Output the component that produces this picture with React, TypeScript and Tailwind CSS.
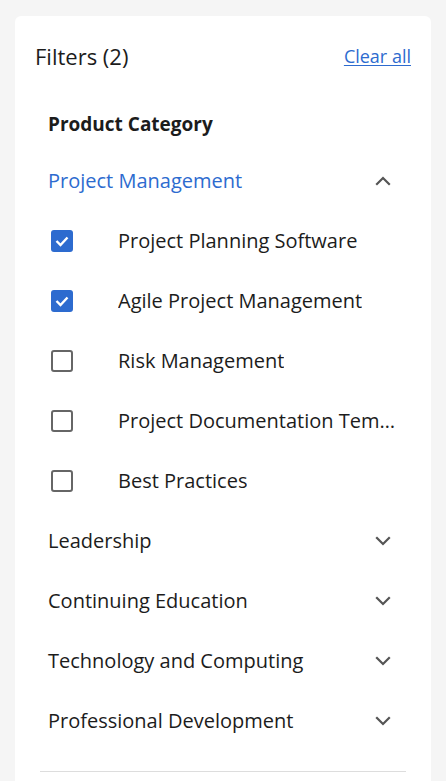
const font = { fontFamily: '"Open Sans", "Noto Sans", sans-serif' }

const items = [
  { label: 'Project Planning Software', checked: true },
  { label: 'Agile Project Management', checked: true },
  { label: 'Risk Management', checked: false },
  { label: 'Project Documentation Templates', checked: false },
  { label: 'Best Practices', checked: false },
]

const groups = ['Leadership', 'Continuing Education', 'Technology and Computing', 'Professional Development']

function Chevron({ up }: { up?: boolean }) {
  return (
    <svg width="24" height="24" viewBox="0 0 24 24" className="shrink-0">
      <polyline
        points={up ? '6,15 12,9 18,15' : '6,9 12,15 18,9'}
        fill="none"
        stroke="#555"
        strokeWidth="2.2"
        strokeLinecap="square"
      />
    </svg>
  )
}

function Checkbox({ checked }: { checked: boolean }) {
  if (checked) {
    return (
      <span className="w-[22px] h-[22px] rounded-[3px] bg-[#2d6bcf] flex items-center justify-center shrink-0">
        <svg width="22" height="22" viewBox="0 0 22 22">
          <polyline points="5.5,11 9.5,15 16.5,7.5" fill="none" stroke="#fff" strokeWidth="2.4" />
        </svg>
      </span>
    )
  }
  return <span className="w-[22px] h-[22px] rounded-[3px] border-2 border-[#666] bg-white shrink-0" />
}

export default function App() {
  return (
    <div className="min-h-screen bg-[#f5f5f5] pt-4 px-[15px] text-[#1c1c1c]" style={font}>
      <div className="bg-white rounded-md px-5 pt-5 pb-10">
        {/* header */}
        <div className="h-10 flex items-center justify-between">
          <h2 className="text-[22px]">Filters (2)</h2>
          <a href="#" className="text-[18px] text-[#2d6bcf] underline underline-offset-2">Clear all</a>
        </div>

        <div className="px-[13px]">
          <div className="h-10 mt-7 flex items-center">
            <h3 className="text-[19px] font-bold">Product Category</h3>
          </div>

          {/* open group */}
          <div className="h-[60px] mt-[7px] flex items-center justify-between pr-[3px]">
            <span className="text-[20px] text-[#2d6bcf]">Project Management</span>
            <Chevron up />
          </div>
          {items.map((it) => (
            <label key={it.label} className="h-[60px] flex items-center gap-[45px] pl-[3px]">
              <Checkbox checked={it.checked} />
              <span className="text-[20px] truncate">{it.label}</span>
            </label>
          ))}

          {groups.map((g) => (
            <div key={g} className="h-[60px] flex items-center justify-between pr-[3px]">
              <span className="text-[20px]">{g}</span>
              <Chevron />
            </div>
          ))}
        </div>

        <div className="mt-5 mx-[5px] border-t border-[#ddd]" />
      </div>
    </div>
  )
}
